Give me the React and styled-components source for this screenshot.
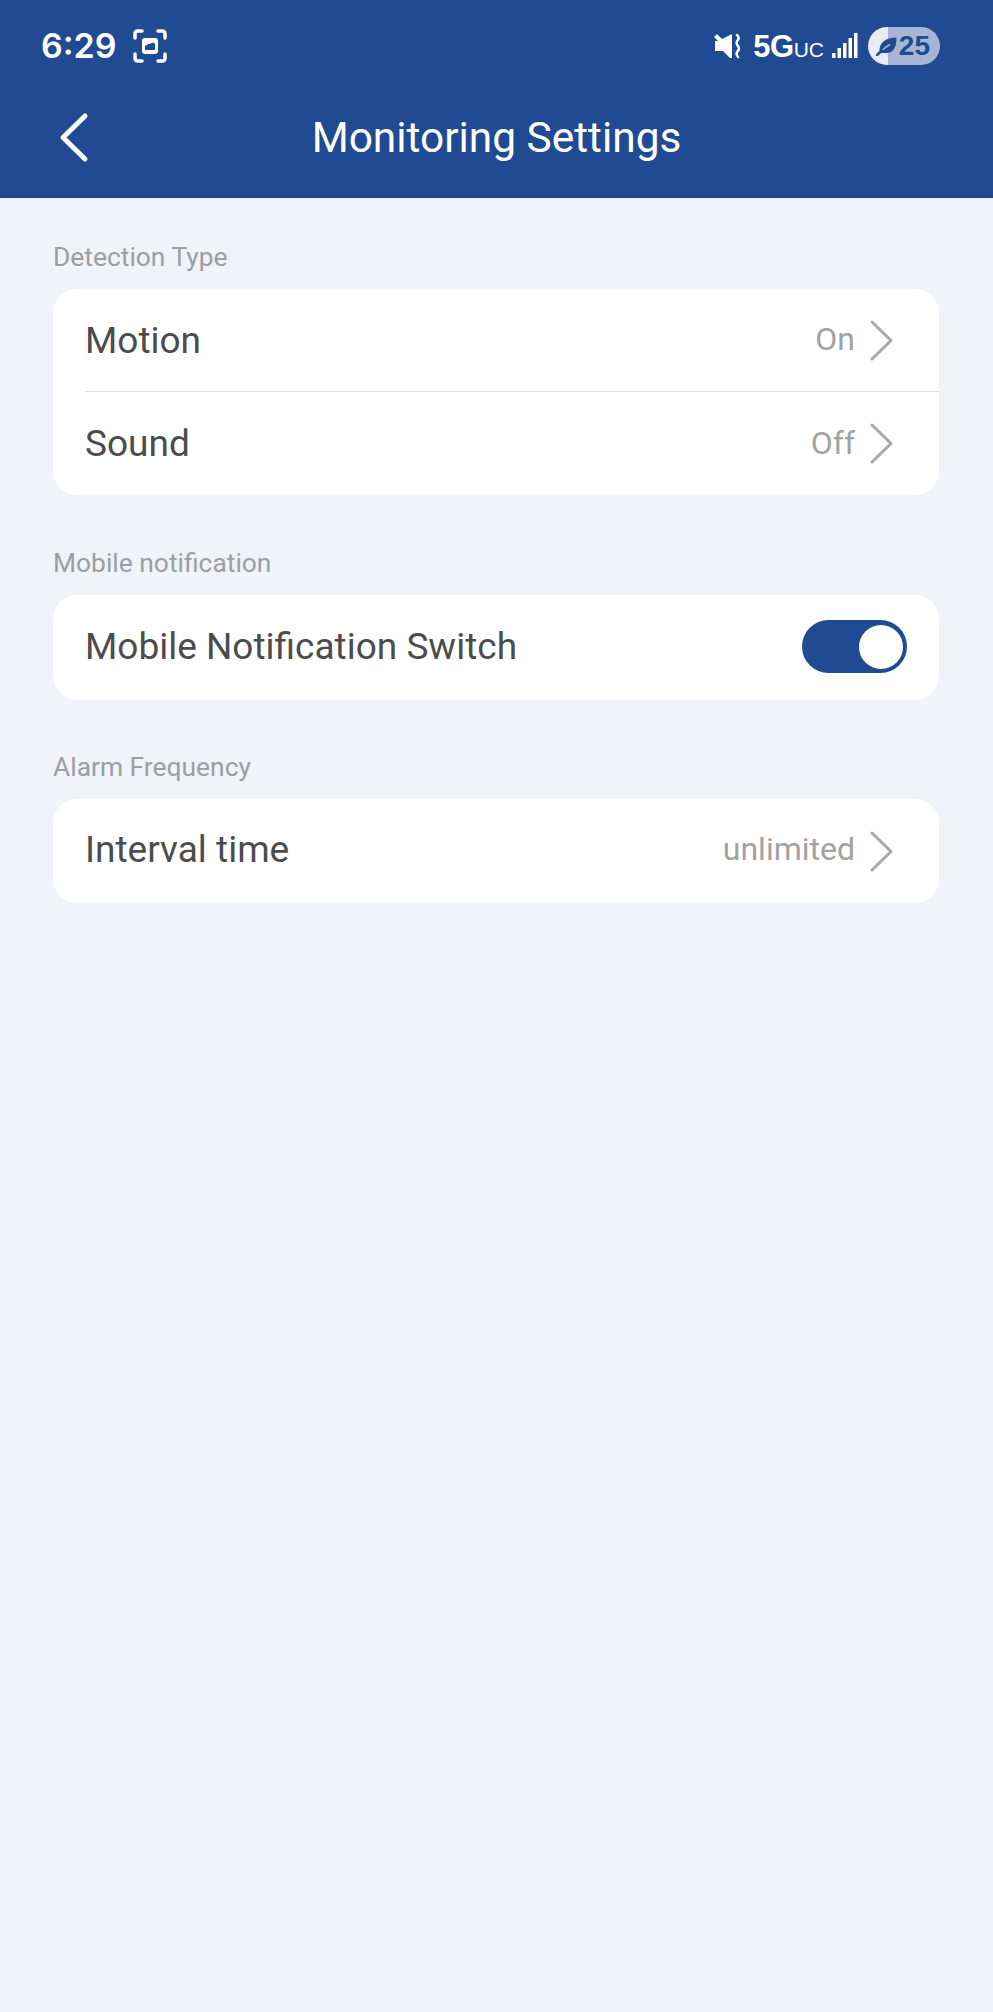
import React from 'react';
import styled, {createGlobalStyle} from 'styled-components';

const GlobalStyle = createGlobalStyle`
html, body {
    margin: 0;
    padding: 0;
    background: #f0f3f8;
    font-family: Roboto, "Liberation Sans", sans-serif;
}`;

const Page = styled.div`
width: 993px;
height: 2012px;
background: #f0f3f8;
overflow: hidden;`;

const Header = styled.header`
height: 198px;
background: #204a91;
color: #fff;
display: flex;
flex-direction: column;`;

const StatusBar = styled.div`
height: 92px;
padding: 0 53px 0 41px;
display: flex;
align-items: center;
justify-content: space-between;`;

const StatusGroup = styled.div`
display: flex;
align-items: center;`;

const Clock = styled.span`
font-family: Inter, sans-serif;
font-size: 34px;
font-weight: 600;
line-height: 1;
margin-right: 16px;`;

const NetworkLabel = styled.span`
font-family: "Liberation Sans", sans-serif;
font-size: 31px;
font-weight: 700;
line-height: 1;
margin: 0 8px 0 12px;
letter-spacing: -0.5px;`;

const NetworkSuffix = styled.span`
font-size: 21px;
font-weight: 400;
letter-spacing: 0;`;

const Battery = styled.div`
width: 72px;
height: 38px;
margin-left: 10px;
border-radius: 19px;
background: linear-gradient(to right, #e6ebf4 0 20px, #a7b6d4 20px);
color: #204a91;
display: flex;
align-items: center;
justify-content: flex-end;
gap: 2px;
padding: 0 10px 0 7px;
box-sizing: border-box;
font-family: "Liberation Sans", sans-serif;
font-size: 28px;
font-weight: 700;`;

const NavBar = styled.div`
flex: 1;
display: flex;
align-items: center;
justify-content: center;
position: relative;
padding-bottom: 14px;`;

const BackButton = styled.div`
position: absolute;
left: 58px;
top: 20px;
line-height: 0;`;

const Title = styled.h1`
margin: 0;
font-size: 42.4px;
font-weight: 400;
line-height: 1;`;

const Content = styled.main`
padding: 0 54px 0 53px;`;

const SectionLabel = styled.div`
font-size: 26.4px;
line-height: 30px;
color: #9b9ea5;
height: 30px;
padding-top: ${p => p.$top}px;
margin-bottom: 17px;`;

const Card = styled.div`
background: #fff;
border-radius: 24px;
overflow: hidden;`;

const Row = styled.div`
height: ${p => p.$height || 103}px;
padding-left: 32px;
display: flex;`;

const RowInner = styled.div`
flex: 1;
display: flex;
align-items: center;
justify-content: space-between;
padding-right: 46px;
box-sizing: border-box;
border-bottom: ${p => (p.$divider ? '1.5px solid #dcdde0' : 'none')};`;

const RowLabel = styled.span`
font-size: 37px;
color: #4c4c4e;
line-height: 1;
margin-bottom: ${p => p.$lift || 0}px;`;

const RowValue = styled.div`
display: flex;
align-items: center;
gap: 15px;
font-size: 32px;
color: #a2a2a4;`;

const ValueText = styled.span`
margin-bottom: ${p => p.$lift || 2}px;`;

const Switch = styled.div`
width: 105px;
height: 53px;
margin: 0 -14px 2px 0;
border-radius: 27px;
background: #204a91;
display: flex;
align-items: center;
justify-content: flex-end;
padding-right: 4px;
box-sizing: border-box;`;

const Knob = styled.div`
width: 44px;
height: 44px;
border-radius: 50%;
background: #fff;`;

const ChevronRight = () => (
    <svg width="23" height="41" viewBox="0 0 23 41" fill="none">
        <path d="M2 2 L21 20.5 L2 39" stroke="#a8a8aa" strokeWidth="3" strokeLinecap="round" strokeLinejoin="round" />
    </svg>
);

const ChevronLeft = () => (
    <svg width="31" height="51" viewBox="0 0 31 51" fill="none">
        <path d="M27 4 L5 25.5 L27 47" stroke="#fff" strokeWidth="5" strokeLinecap="round" strokeLinejoin="round" />
    </svg>
);

const ScreenshotIcon = () => (
    <svg width="34" height="34" viewBox="0 0 34 34" fill="none">
        <path d="M2 9 V5 Q2 2 5 2 H9 M25 2 H29 Q32 2 32 5 V9 M32 25 V29 Q32 32 29 32 H25 M9 32 H5 Q2 32 2 29 V25" stroke="#fff" strokeWidth="3.5" strokeLinecap="round" />
        <rect x="9" y="9" width="16" height="16" rx="3" fill="#fff" />
        <path d="M12 21 V17.5 Q12 16 14 16 Q15 14 17 15 Q19 13 22 14.5 V21 Z" fill="#204a91" />
    </svg>
);

const MuteIcon = () => (
    <svg width="28" height="26" viewBox="0 0 28 26" fill="none">
        <path d="M1 4 L4 1 L9 6 L19 1 V25 H17 L10 18 H2 V8 H5 Z" fill="#fff" />
        <path d="M24 2 Q27 4.5 24.5 7.5 Q22.5 10 25 13 Q27 16 24.5 18.5 Q22.5 21 25 24" stroke="#fff" strokeWidth="2.5" strokeLinecap="round" />
    </svg>
);

const SignalIcon = () => (
    <svg width="26" height="26" viewBox="0 0 26 26" fill="#fff">
        <rect x="0" y="20" width="3.5" height="5" />
        <rect x="5.5" y="15" width="3.5" height="10" />
        <rect x="11" y="10" width="3.5" height="15" />
        <rect x="16.5" y="5" width="3.5" height="20" />
        <rect x="22" y="0" width="3.5" height="25" />
    </svg>
);

const LeafIcon = () => (
    <svg width="21" height="19" viewBox="0 0 21 19" fill="none">
        <path d="M20.5 0.5 C20.5 10 18 16 10 16 H3.5 C2.5 6 9 0.5 20.5 0.5 Z" fill="#204a91" />
        <path d="M6 13.5 C9 10.5 11 9 14 7.5" stroke="#a7b6d4" strokeWidth="1.5" />
        <path d="M1 18 L6 13.5" stroke="#204a91" strokeWidth="2.5" strokeLinecap="round" />
    </svg>
);

const App = () => {
    return (
        <Page>
            <GlobalStyle />
            <Header>
                <StatusBar>
                    <StatusGroup>
                        <Clock>6:29</Clock>
                        <ScreenshotIcon />
                    </StatusGroup>
                    <StatusGroup>
                        <MuteIcon />
                        <NetworkLabel>5G<NetworkSuffix>UC</NetworkSuffix></NetworkLabel>
                        <SignalIcon />
                        <Battery><LeafIcon />25</Battery>
                    </StatusGroup>
                </StatusBar>
                <NavBar>
                    <BackButton><ChevronLeft /></BackButton>
                    <Title>Monitoring Settings</Title>
                </NavBar>
            </Header>
            <Content>
                <SectionLabel $top={44}>Detection Type</SectionLabel>
                <Card>
                    <Row>
                        <RowInner $divider>
                            <RowLabel>Motion</RowLabel>
                            <RowValue><ValueText>On</ValueText><ChevronRight /></RowValue>
                        </RowInner>
                    </Row>
                    <Row>
                        <RowInner>
                            <RowLabel>Sound</RowLabel>
                            <RowValue><ValueText>Off</ValueText><ChevronRight /></RowValue>
                        </RowInner>
                    </Row>
                </Card>
                <SectionLabel $top={53}>Mobile notification</SectionLabel>
                <Card>
                    <Row $height={105}>
                        <RowInner>
                            <RowLabel $lift={2}>Mobile Notification Switch</RowLabel>
                            <Switch><Knob /></Switch>
                        </RowInner>
                    </Row>
                </Card>
                <SectionLabel $top={52}>Alarm Frequency</SectionLabel>
                <Card>
                    <Row $height={104}>
                        <RowInner>
                            <RowLabel $lift={3}>Interval time</RowLabel>
                            <RowValue><ValueText $lift={4}>unlimited</ValueText><ChevronRight /></RowValue>
                        </RowInner>
                    </Row>
                </Card>
            </Content>
        </Page>
    );
};

export default App;
